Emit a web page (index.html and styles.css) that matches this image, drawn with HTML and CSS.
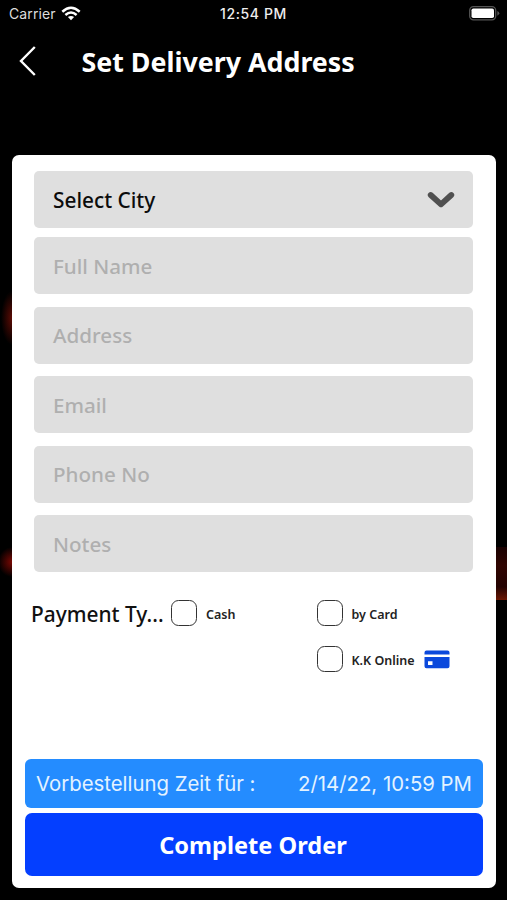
FILE: index.html
```html
<!DOCTYPE html>
<html lang="de">
<head>
<meta charset="utf-8">
<title>Set Delivery Address</title>
<link rel="stylesheet" href="styles.css">
</head>
<body>
<div class="screen">
  <header class="status">
    <div class="carrier"><span>Carrier</span>
      <svg width="20" height="15" viewBox="0 0 20 15" fill="none" stroke="#fff" stroke-width="2.5"><path d="M1.3 5.7Q10 -2.2 18.7 5.7M4.4 9Q10 4 15.6 9"/><path d="M10 14.3 6.9 11.1Q10 8.7 13.1 11.1Z" fill="#fff" stroke="none"/></svg>
    </div>
    <div class="clock">12:54 PM</div>
    <svg class="battery" width="31" height="15" viewBox="0 0 31 15"><rect x=".7" y=".7" width="26" height="13.2" rx="3.8" fill="none" stroke="#555" stroke-width="1.3"/><rect x="2.5" y="2.5" width="22.5" height="9.6" rx="1.8" fill="#fff"/><path d="M28.3 5v4.7q2-.8 2-2.35T28.3 5Z" fill="#555"/></svg>
  </header>
  <nav class="nav">
    <svg class="back" width="18" height="32" viewBox="0 0 18 32" fill="none" stroke="#fff" stroke-width="2.4"><path d="M15.8 2 2 16 15.8 30"/></svg>
    <h1>Set Delivery Address</h1>
  </nav>
  <main class="card">
    <div class="field select"><span>Select City</span>
      <svg width="28" height="18" viewBox="0 0 28 18" fill="none" stroke="#505050" stroke-width="5.8" stroke-linecap="round" stroke-linejoin="round"><path d="M3.7 4 14 13.3 24.3 4"/></svg>
    </div>
    <div class="field"><span>Full Name</span></div>
    <div class="field"><span>Address</span></div>
    <div class="field"><span>Email</span></div>
    <div class="field"><span>Phone No</span></div>
    <div class="field"><span>Notes</span></div>
    <section class="payment">
      <div class="ptitle">Payment Ty...</div>
      <div class="option"><i class="box"></i><span>Cash</span></div>
      <div class="option"><i class="box"></i><span>by Card</span></div>
      <div class="option online"><i class="box"></i><span>K.K Online</span>
        <svg width="26" height="19" viewBox="0 0 26 19"><path fill="#0b49dc" fill-rule="evenodd" d="M2.5.5h21Q25.5.5 25.5 2.5v2H.5v-2Q.5.5 2.5.5ZM.5 7h25v9.3q0 2-2 2h-21q-2 0-2-2ZM4 11.2v3.8h4.5v-3.8Z"/></svg>
      </div>
    </section>
    <div class="preorder"><span>Vorbestellung Zeit für :</span><span>2/14/22, 10:59 PM</span></div>
    <div class="complete"><span>Complete Order</span></div>
  </main>
</div>
</body>
</html>
```
FILE: styles.css
```css
* { box-sizing: border-box; }
body { margin: 0; background: #000; }
svg { display: block; flex: none; }
span, h1, .ptitle { white-space: nowrap; }
.screen {
  width: 507px; height: 900px; overflow: hidden;
  background:
    radial-gradient(ellipse 11px 27px at 12px 318px, #5c0b04, transparent),
    radial-gradient(ellipse 14px 15px at 12px 562px, #7a0803, transparent),
    linear-gradient(#1a0202, #300502 35%, #240302 75%, #6b1703) 496px 547px / 11px 53px no-repeat,
    #000;
  font-family: "Noto Sans", sans-serif;
}
.status {
  height: 28px; padding: 0 7px 0 9px;
  display: grid; grid-template-columns: 1fr auto 1fr; align-items: center;
  color: #eee; font: 14px/28px Inter, sans-serif;
}
.carrier { display: flex; align-items: center; gap: 5.5px; color: #ddd; letter-spacing: .1px; }
.carrier svg { margin-top: -2px; }
.clock { font-weight: 500; letter-spacing: .6px; margin: 0 0 0 -2px; }
.battery { justify-self: end; margin-top: -1px; }
.nav { height: 127px; padding: 17px 0 0 19px; display: flex; align-items: flex-start; }
.nav h1 { margin: -1px 0 0 44.5px; color: #fff; font-size: 26.8px; line-height: 36px; font-weight: 700; }
.card {
  width: 484px; height: 733px; margin-left: 12px; padding: 15.5px 13px 12px;
  background: #fff; border-radius: 7px;
  display: flex; flex-direction: column;
}
.field {
  flex: none; height: 57px; margin: 0 9.6px 12.5px 9px; padding: 0 19px;
  display: flex; align-items: center; justify-content: space-between;
  background: #dfdfdf; border-radius: 5px;
  color: #afafaf; font-size: 20.6px; font-weight: 500;
}
.select { margin-bottom: 9.5px; color: #0c0c0c; font-size: 20.8px; }
.select span { padding-top: 2px; }
.select svg { margin-right: -.5px; margin-top: 1px; }
.payment {
  margin: 5px 0 0 6px;
  display: grid; grid-template-columns: 140px 145.5px 1fr; grid-template-rows: 46px 46px; align-items: center;
}
.ptitle { padding-top: 2px; color: #111; font-size: 20.9px; font-weight: 500; }
.option { display: flex; align-items: center; color: #222; font-size: 12.5px; font-weight: 600; }
.option span { padding-top: 3px; }
.online { grid-column: 3; }
.box { width: 26px; height: 26px; margin-right: 9px; border: 1.5px solid #333; border-radius: 7.5px; flex: none; }
.online svg { margin-left: 9px; margin-top: 1px; }
.preorder {
  height: 49px; margin-top: auto; padding: 0 11px;
  display: flex; align-items: center; justify-content: space-between;
  background: #248cff; border-radius: 6px;
  color: #e4f3ff; font: 20.35px Inter, sans-serif;
}
.complete {
  height: 63px; margin-top: 5px; padding-right: 2px;
  display: flex; align-items: center; justify-content: center;
  background: #043fff; border-radius: 7px;
  color: #fff; font-size: 23.6px; font-weight: 700;
}
```
